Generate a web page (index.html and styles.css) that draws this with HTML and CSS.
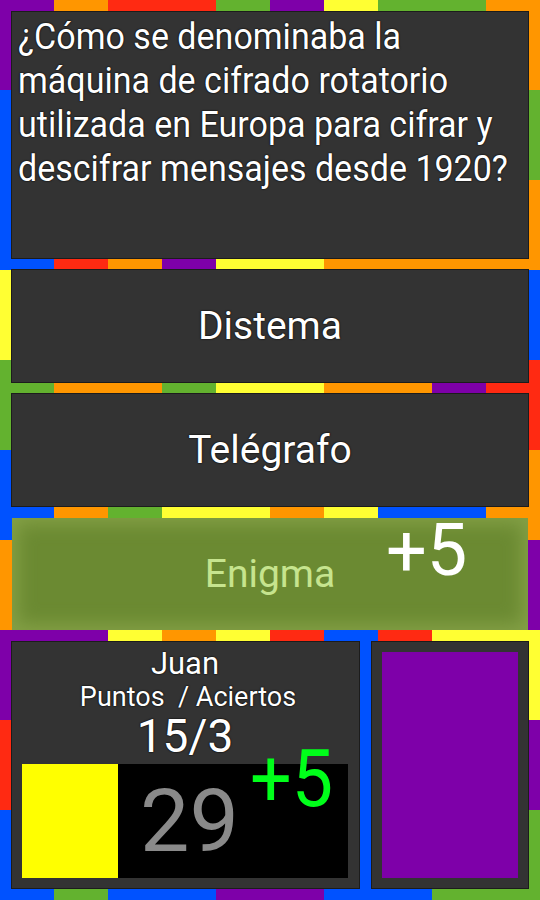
FILE: index.html
```html
<!DOCTYPE html>
<html lang="es">
<head>
<meta charset="utf-8">
<title>Trivia</title>
<link rel="stylesheet" href="styles.css">
</head>
<body>
<div class="stage">
  <div class="tiles">
    <i class="p"></i><i class="o"></i><i class="r"></i><i class="r"></i><i class="g"></i><i class="p"></i><i class="y"></i><i class="g"></i><i class="g"></i><i class="o"></i>
    <i class="b"></i><i class="y"></i><i class="g"></i><i class="o"></i><i class="b"></i><i class="r"></i><i class="p"></i><i class="y"></i><i class="o"></i><i class="g"></i>
    <i class="b"></i><i class="r"></i><i class="o"></i><i class="p"></i><i class="y"></i><i class="y"></i><i class="o"></i><i class="o"></i><i class="o"></i><i class="o"></i>
    <i class="y"></i><i class="r"></i><i class="b"></i><i class="g"></i><i class="p"></i><i class="o"></i><i class="y"></i><i class="g"></i><i class="r"></i><i class="b"></i>
    <i class="g"></i><i class="o"></i><i class="o"></i><i class="g"></i><i class="y"></i><i class="y"></i><i class="o"></i><i class="o"></i><i class="p"></i><i class="r"></i>
    <i class="b"></i><i class="o"></i><i class="g"></i><i class="y"></i><i class="y"></i><i class="o"></i><i class="y"></i><i class="b"></i><i class="b"></i><i class="o"></i>
    <i class="o"></i><i class="g"></i><i class="r"></i><i class="b"></i><i class="y"></i><i class="g"></i><i class="r"></i><i class="o"></i><i class="b"></i><i class="p"></i>
    <i class="p"></i><i class="p"></i><i class="y"></i><i class="o"></i><i class="y"></i><i class="r"></i><i class="b"></i><i class="r"></i><i class="y"></i><i class="y"></i>
    <i class="r"></i><i class="y"></i><i class="o"></i><i class="g"></i><i class="r"></i><i class="y"></i><i class="b"></i><i class="g"></i><i class="o"></i><i class="p"></i>
    <i class="b"></i><i class="g"></i><i class="b"></i><i class="b"></i><i class="p"></i><i class="p"></i><i class="b"></i><i class="b"></i><i class="g"></i><i class="g"></i>
  </div>

  <main class="game">
    <section class="card question">
      <span class="qline">¿Cómo se denominaba la</span>
      <span class="qline">máquina de cifrado rotatorio</span>
      <span class="qline">utilizada en Europa para cifrar y</span>
      <span class="qline">descifrar mensajes desde 1920?</span>
    </section>

    <div class="card answer">Distema</div>
    <div class="card answer">Telégrafo</div>
    <div class="answer correct">
      <span class="correct-label">Enigma</span>
      <span class="bonus">+5</span>
    </div>

    <section class="players">
      <div class="card player">
        <div class="pname">Juan</div>
        <div class="plabel">Puntos &nbsp;/ Aciertos</div>
        <div class="pscore">15/3</div>
        <div class="timer">
          <div class="swatch"></div>
          <div class="count">29</div>
          <div class="gain">+5</div>
        </div>
      </div>
      <div class="card opponent">
        <div class="opp-fill"></div>
      </div>
    </section>
  </main>
</div>
</body>
</html>
```

FILE: styles.css
```css
* { box-sizing: border-box; }

html, body {
  margin: 0;
  padding: 0;
  width: 540px;
  height: 900px;
  overflow: hidden;
  background: #333;
}

body {
  font-family: Roboto, "Liberation Sans", sans-serif;
  color: #fff;
}

.stage {
  display: grid;
  grid-template-columns: 540px;
  grid-template-rows: 900px;
  width: 540px;
  height: 900px;
}

.tiles, .game { grid-area: 1 / 1; min-width: 0; }

.tiles {
  display: grid;
  grid-template-columns: repeat(10, 54px);
  grid-template-rows: repeat(10, 90px);
}

.tiles i { display: block; }
.p { background: #7e00a9; }
.o { background: #ff9600; }
.r { background: #ff2a12; }
.g { background: #63b22f; }
.y { background: #ffff33; }
.b { background: #0052ff; }

.game {
  display: flex;
  flex-direction: column;
  gap: 12px;
  padding: 12px;
  width: 540px;
}

.card {
  background: #333333;
  box-shadow: 0 0 0 1px #1c1c1c;
}

.question {
  height: 246px;
  padding: 3px 0 0 6px;
  font-size: 36px;
  line-height: 44px;
  overflow: hidden;
  text-shadow: 0 0 2px #000, 0 0 1px #000;
}

.qline {
  display: block;
  white-space: nowrap;
  transform: scaleX(0.945);
  transform-origin: 0 50%;
}

.answer {
  height: 112px;
  display: flex;
  align-items: center;
  justify-content: center;
  font-size: 39px;
  text-shadow: 0 0 2px #000, 0 0 1px #000;
}

.correct {
  position: relative;
  background: #6b8a32;
  box-shadow: inset 0 0 18px 6px #84a046;
  text-shadow: none;
}

.correct-label { color: #c6e48e; }

.bonus {
  position: absolute;
  left: 374px;
  top: -10px;
  font-size: 72px;
  color: #fff;
}

.players {
  height: 246px;
  display: grid;
  grid-template-columns: 347px 1fr;
  gap: 13px;
}

.player {
  display: flex;
  flex-direction: column;
  align-items: center;
  padding: 5px 11px 10px 10px;
  text-shadow: 0 0 2px #000, 0 0 1px #000;
}

.pname {
  font-size: 31px;
  line-height: 34px;
}

.plabel {
  font-size: 27px;
  line-height: 33px;
  margin-left: 6px;
}

.pscore {
  font-size: 46px;
  line-height: 44px;
}

.timer {
  position: relative;
  margin-top: 6px;
  align-self: stretch;
  flex: 1;
  display: flex;
  background: #000;
  text-shadow: none;
}

.swatch {
  width: 96px;
  background: #ffff00;
}

.count {
  padding-left: 22px;
  font-size: 88px;
  line-height: 114px;
  color: #8a8a8a;
}

.gain {
  position: absolute;
  left: 228px;
  top: -30px;
  font-size: 80px;
  line-height: 90px;
  color: #00ff1a;
  transform: scaleX(0.92);
  transform-origin: 0 0;
}

.opponent {
  padding: 10px;
  display: flex;
}

.opp-fill {
  flex: 1;
  background: #7e00a9;
}
```
